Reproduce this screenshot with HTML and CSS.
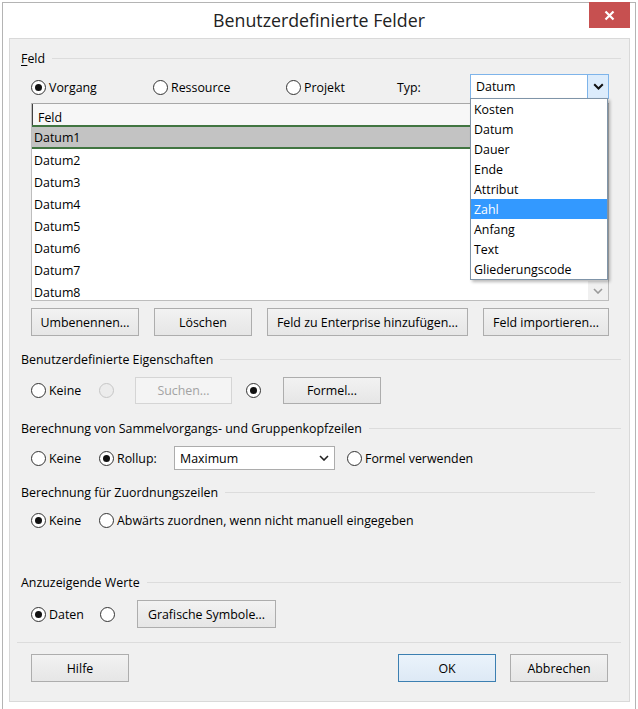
FILE: index.html
```html
<!DOCTYPE html>
<html lang="de">
<head>
<meta charset="utf-8">
<title>Benutzerdefinierte Felder</title>
<link rel="stylesheet" href="styles.css">
</head>
<body>
<div class="window">
  <div class="titlebar">
    <span class="tb-spacer"></span>
    <h1 class="title">Benutzerdefinierte Felder</h1>
    <button class="close" aria-label="Schließen">
      <svg width="11" height="11" viewBox="0 0 11 11"><path d="M1.5 1.5l8 8M9.5 1.5l-8 8" stroke="#fff" stroke-width="2.2" fill="none"/></svg>
    </button>
  </div>
  <div class="panel">
    <section class="group">
      <div class="group-head"><span class="group-label"><u>F</u>eld</span><span class="rule"></span></div>
      <div class="controls">
        <div class="row row-type">
          <label class="opt w-vorgang"><span class="radio checked"></span>Vorgang</label>
          <label class="opt w-ressource"><span class="radio"></span>Ressource</label>
          <label class="opt w-projekt"><span class="radio"></span>Projekt</label>
          <span class="typ-label">Typ:</span>
          <div class="combo">
            <div class="select select-open">
              <span class="select-text">Datum</span>
              <span class="drop-btn"><svg width="11" height="7" viewBox="0 0 11 7"><path d="M1.2 1.2l4.3 4.3 4.3-4.3" fill="none" stroke="#111" stroke-width="2"/></svg></span>
            </div>
            <ul class="popup">
              <li>Kosten</li>
              <li>Datum</li>
              <li>Dauer</li>
              <li>Ende</li>
              <li>Attribut</li>
              <li class="hl">Zahl</li>
              <li>Anfang</li>
              <li>Text</li>
              <li>Gliederungscode</li>
            </ul>
          </div>
        </div>
        <div class="grid">
          <div class="grid-main">
            <div class="grid-head"><span class="head-cell">Feld</span></div>
            <div class="grid-row selected">Datum1</div>
            <div class="grid-row">Datum2</div>
            <div class="grid-row">Datum3</div>
            <div class="grid-row">Datum4</div>
            <div class="grid-row">Datum5</div>
            <div class="grid-row">Datum6</div>
            <div class="grid-row">Datum7</div>
            <div class="grid-row">Datum8</div>
          </div>
          <div class="scrollbar">
            <span class="scroll-down"><svg width="10" height="6" viewBox="0 0 10 6"><path d="M1 1l4 4 4-4" fill="none" stroke="#9a9a9a" stroke-width="1.6"/></svg></span>
          </div>
        </div>
        <div class="row btn-row">
          <button class="btn w-umb">Umbenennen...</button>
          <button class="btn w-loe">Löschen</button>
          <button class="btn w-ent">Feld zu Enterprise hinzufügen...</button>
          <button class="btn w-imp">Feld importieren...</button>
        </div>
      </div>
    </section>

    <section class="group g-eig">
      <div class="group-head"><span class="group-label">Benutzerdefinierte Eigenschaften</span><span class="rule"></span></div>
      <div class="controls">
        <div class="row row-eig">
          <label class="opt w-keine"><span class="radio"></span>Keine</label>
          <span class="radio disabled"></span>
          <button class="btn btn-disabled w-suchen" disabled>Suchen...</button>
          <span class="radio checked gap-radio"></span>
          <button class="btn w-formel">Formel...</button>
        </div>
      </div>
    </section>

    <section class="group g-sum">
      <div class="group-head"><span class="group-label">Berechnung von Sammelvorgangs- und Gruppenkopfzeilen</span><span class="rule"></span></div>
      <div class="controls">
        <div class="row row-sum">
          <label class="opt w-keine"><span class="radio"></span>Keine</label>
          <label class="opt w-rollup"><span class="radio checked"></span>Rollup:</label>
          <div class="select w-max">
            <span class="select-text">Maximum</span>
            <span class="drop-plain"><svg width="10" height="6" viewBox="0 0 10 6"><path d="M1 1l4 4 4-4" fill="none" stroke="#222" stroke-width="1.6"/></svg></span>
          </div>
          <label class="opt gap-formel"><span class="radio"></span>Formel verwenden</label>
        </div>
      </div>
    </section>

    <section class="group g-zuo">
      <div class="group-head"><span class="group-label">Berechnung für Zuordnungszeilen</span><span class="rule rule-short"></span></div>
      <div class="controls">
        <div class="row row-zuo">
          <label class="opt w-keine"><span class="radio checked"></span>Keine</label>
          <label class="opt"><span class="radio"></span>Abwärts zuordnen, wenn nicht manuell eingegeben</label>
        </div>
      </div>
    </section>

    <section class="group g-werte">
      <div class="group-head"><span class="group-label">Anzuzeigende Werte</span><span class="rule"></span></div>
      <div class="controls">
        <div class="row row-werte">
          <label class="opt w-daten"><span class="radio checked"></span>Daten</label>
          <span class="radio"></span>
          <button class="btn w-grafik">Grafische Symbole...</button>
        </div>
      </div>
    </section>

    <div class="separator"></div>

    <div class="footer">
      <button class="btn w-std">Hilfe</button>
      <span class="footer-spacer"></span>
      <button class="btn btn-default w-std">OK</button>
      <button class="btn w-std">Abbrechen</button>
    </div>
  </div>
</div>
</body>
</html>
```

FILE: styles.css
```css
* { box-sizing: border-box; }

html, body {
  margin: 0;
  padding: 0;
  background: #ffffff;
}

body {
  font-family: "Open Sans", "Noto Sans", sans-serif;
  font-size: 12.4px;
  color: #000;
  width: 638px;
  height: 709px;
  overflow: hidden;
}

.window {
  margin: 2px 2px 0 2px;
  height: 707px;
  border: 1px solid #b4b4b4;
  border-bottom: none;
  background: #fff;
}

/* title bar */
.titlebar {
  display: grid;
  grid-template-columns: 1fr auto 1fr;
  height: 35px;
}

.title {
  margin: 0;
  font-weight: normal;
  font-size: 17.8px;
  line-height: 34px;
  color: #222;
  white-space: nowrap;
}

.close {
  justify-self: end;
  align-self: start;
  margin: -1px 5px 0 0;
  width: 41px;
  height: 26px;
  border: none;
  padding: 0;
  background: #c75050;
  display: flex;
  align-items: center;
  justify-content: center;
}

/* main panel */
.panel {
  margin: 0 5px 0 6px;
  height: 664px;
  border: 1px solid #d9d9d9;
  background: #f0f0f0;
  padding: 10px 8px 0 11px;
}

.group-head {
  display: flex;
  align-items: center;
  height: 18px;
}

.group-label {
  white-space: nowrap;
  color: #000;
}

.group-label u { text-decoration: underline; text-underline-offset: 2px; }

.rule {
  flex: 1;
  height: 1px;
  background: #dcdcdc;
  margin-left: 7px;
}

.rule-short { margin-right: 26px; }

.controls {
  padding: 0 12px 0 10px;
}

.row {
  display: flex;
  align-items: center;
}

/* radios */
.opt {
  display: flex;
  align-items: center;
  white-space: nowrap;
}

.radio {
  flex: none;
  width: 15px;
  height: 15px;
  border: 1px solid #333;
  border-radius: 50%;
  background: #fff;
  margin-right: 3px;
  display: flex;
  align-items: center;
  justify-content: center;
}

.radio.checked::after {
  content: "";
  width: 7px;
  height: 7px;
  border-radius: 50%;
  background: #111;
}

.radio.disabled {
  border-color: #c6c6c6;
  background: #ececec;
}

/* row 1 */
.row-type { margin-top: 7px; height: 25px; }
.row-type .opt, .typ-label { padding-top: 1px; }
.w-vorgang { width: 122px; }
.w-ressource { width: 133px; }
.w-projekt { width: 111px; }
.typ-label { width: 73px; }

.combo {
  position: relative;
  width: 139px;
}

.select {
  display: flex;
  align-items: stretch;
  height: 24px;
  border: 1px solid #acacac;
  background: #fff;
}

.select-open {
  height: 25px;
  border-color: #7eb4ea;
}

.select-text {
  flex: 1;
  display: flex;
  align-items: center;
  padding-left: 5px;
}

.drop-btn {
  width: 21px;
  border-left: 1px solid #7eb4ea;
  background: #dcecfc;
  display: flex;
  align-items: center;
  justify-content: center;
}

.drop-plain {
  width: 20px;
  display: flex;
  align-items: center;
  justify-content: center;
}

.popup {
  position: absolute;
  top: 24px;
  left: 0;
  width: 138px;
  margin: 0;
  padding: 0;
  list-style: none;
  background: #fff;
  border: 1px solid #7f94a8;
  box-shadow: 2px 2px 3px rgba(0, 0, 0, 0.28);
  z-index: 5;
}

.popup li {
  height: 20px;
  line-height: 21px;
  padding-left: 3px;
}

.popup li.hl {
  background: #3399ff;
  color: #fff;
}

/* grid / list */
.grid {
  margin-top: 4px;
  height: 198px;
  width: 578px;
  border: 1px solid #bdbdbd;
  border-top-color: #a8a8a8;
  background: #fff;
  display: flex;
  overflow: hidden;
}

.grid-main {
  flex: 1;
  min-width: 0;
}

.grid-head {
  height: 21px;
  background: #f7f7f7;
  display: flex;
  align-items: stretch;
}

.head-cell {
  border-left: 1px solid #404040;
  padding-left: 5px;
  display: flex;
  align-items: center;
  padding-top: 6px;
  width: 100%;
}

.grid-row {
  height: 22px;
  line-height: 23px;
  padding-left: 2px;
}

.grid-row.selected {
  height: 24px;
  line-height: 21px;
  background: #c3c3c3;
  border-top: 2px solid #417541;
  border-bottom: 2px solid #417541;
}

.scrollbar {
  width: 20px;
  background: #fff;
  display: flex;
  flex-direction: column;
  justify-content: flex-end;
}

.scroll-down {
  height: 19px;
  background: #f0f0f0;
  display: flex;
  align-items: center;
  justify-content: center;
}

/* buttons */
.btn {
  font: inherit;
  color: #000;
  height: 28px;
  padding: 0;
  border: 1px solid #adadad;
  background: linear-gradient(#f2f2f2, #e6e6e6);
  white-space: nowrap;
}

.btn-disabled {
  color: #a3a3a3;
  border-color: #d5d5d5;
  background: #f4f4f4;
}

.btn-default {
  border-color: #3c7fb1;
  background: linear-gradient(#eaf3fb, #dde9f5);
}

.btn-row {
  margin-top: 7px;
  height: 28px;
  justify-content: space-between;
}

.w-umb { width: 108px; }
.w-loe { width: 98px; }
.w-ent { width: 201px; }
.w-imp { width: 126px; }

/* group 2 */
.g-eig { margin-top: 14px; }
.row-eig { margin-top: 9px; height: 27px; }
.row-eig .btn { height: 27px; }
.w-keine { width: 68px; }
.w-suchen { width: 97px; margin-left: 18px; }
.gap-radio { margin-left: 14px; }
.w-formel { width: 98px; margin-left: 19px; }

/* group 3 */
.g-sum { margin-top: 15px; }
.row-sum { margin-top: 9px; height: 24px; }
.w-rollup { width: 75px; }
.w-max { width: 161px; }
.gap-formel { margin-left: 12px; }

/* group 4 */
.g-zuo { margin-top: 13px; }
.row-zuo { margin-top: 7px; height: 24px; }

/* group 5 */
.g-werte { margin-top: 41px; }
.row-werte { margin-top: 9px; height: 28px; }
.w-daten { width: 69px; }
.w-grafik { width: 139px; margin-left: 19px; }

.separator {
  margin: 14px 0 0 -4px;
  height: 1px;
  background: #dcdcdc;
}

.footer {
  margin-top: 11px;
  padding: 0 13px 0 10px;
  display: flex;
  align-items: center;
  gap: 14px;
}

.footer-spacer { flex: 1; }
.w-std { width: 98px; }
```
